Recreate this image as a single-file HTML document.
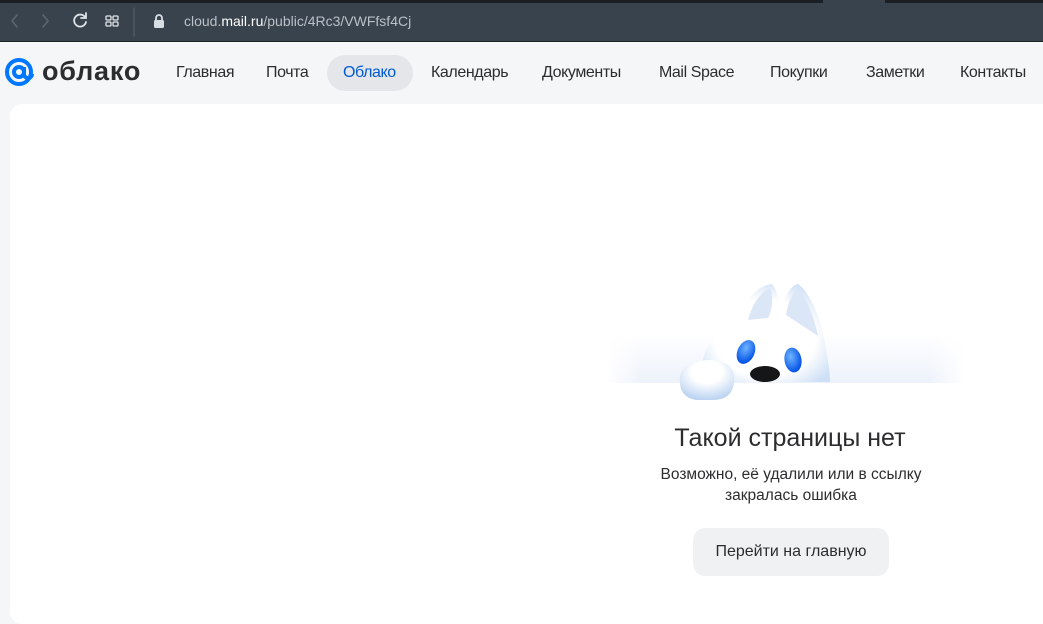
<!DOCTYPE html>
<html><head><meta charset="utf-8"><style>
*{margin:0;padding:0;box-sizing:border-box}
body{width:1043px;height:615px;overflow:hidden;background:#f5f6f7;font-family:"Liberation Sans","Noto Sans CJK SC",sans-serif;position:relative}
.top{position:absolute;left:0;top:0;width:1043px;height:42px;background:#39434d;border-bottom:1px solid #1e2226}
.strip{position:absolute;left:0;top:0;height:3px;background:#1c1f23}
.url{position:absolute;left:184px;top:13px;font-size:14px;color:#b9c0c7}
.url b{color:#fff;font-weight:normal}
.nav a{position:absolute;top:64px;font-size:16px;letter-spacing:-0.4px;color:#2c2d2e;text-decoration:none}
.pill{position:absolute;left:327px;top:55px;width:86px;height:36px;border-radius:18px;background:#e4e6ea}
.card{position:absolute;left:10px;top:104px;width:1050px;height:520px;background:#fff;border-radius:12px}
h1{position:absolute;top:424px;font-size:25px;font-weight:normal;color:#2c2d2e;text-align:center}
.c{position:absolute;left:600px;width:382px;text-align:center;color:#2c2d2e}
.btn{position:absolute;left:693px;top:528px;width:196px;height:48px;border-radius:12px;background:#f0f1f3;font-size:16px;color:#2c2d2e;text-align:center;line-height:48px}
</style></head><body>
<div class="top"></div>
<div class="strip" style="width:823px"></div>
<div class="strip" style="left:885px;width:158px"></div>
<svg style="position:absolute;left:0;top:0" width="180" height="42" fill="none" stroke-linecap="round">
<path d="M17 15l-5 6 5 6" stroke="#5d6670" stroke-width="1.6"/>
<path d="M43 15l5 6-5 6" stroke="#5d6670" stroke-width="1.6"/>
<path d="M85 17a6 6 0 1 0 1 5" stroke="#e0e4e8" stroke-width="1.8"/><path d="M86 13v5h-5" stroke="#e0e4e8" stroke-width="1.8"/>
<rect x="106" y="16" width="5" height="4" rx="1" stroke="#e0e4e8" stroke-width="1.3"/><rect x="113" y="16" width="5" height="4" rx="1" stroke="#e0e4e8" stroke-width="1.3"/><rect x="106" y="22" width="5" height="4" rx="1" stroke="#e0e4e8" stroke-width="1.3"/><rect x="113" y="22" width="5" height="4" rx="1" stroke="#e0e4e8" stroke-width="1.3"/>
<path d="M134 8v28" stroke="#5a636c" stroke-width="1"/>
<rect x="154" y="20" width="10" height="8" rx="1.5" fill="#d8dde2"/><path d="M156 20v-2a3 3 0 0 1 6 0v2" stroke="#d8dde2" stroke-width="1.8"/>
</svg>
<div class="url">cloud.<b>mail.ru</b>/public/4Rc3/VWFfsf4Cj</div>
<svg style="position:absolute;left:4px;top:57px" width="32" height="32"><circle cx="15" cy="15" r="12" fill="none" stroke="#0077ff" stroke-width="4"/><circle cx="15" cy="15" r="5" fill="none" stroke="#0077ff" stroke-width="4"/><path d="M20 10v7a4 4 0 0 0 8 0" fill="none" stroke="#0077ff" stroke-width="4"/></svg>
<div style="position:absolute;left:42px;top:56px;font-size:27px;font-weight:bold;color:#2c2d2e;letter-spacing:0.8px">облако</div>
<div class="pill"></div>
<div class="nav">
<a style="left:176px">Главная</a><a style="left:266px">Почта</a><a style="left:343px;color:#005bd1">Облако</a><a style="left:431px">Календарь</a><a style="left:542px">Документы</a><a style="left:659px">Mail Space</a><a style="left:770px">Покупки</a><a style="left:866px">Заметки</a><a style="left:960px">Контакты</a>
</div>
<div class="card"></div>
<svg style="position:absolute;left:600px;top:270px" width="380" height="140">
<defs>
<linearGradient id="band" x1="0" x2="0" y1="0" y2="1"><stop offset="0" stop-color="#fff"/><stop offset="1" stop-color="#edf2fa"/></linearGradient>
<linearGradient id="bandx" x1="0" x2="1"><stop offset="0" stop-color="#fff" stop-opacity="1"/><stop offset=".1" stop-color="#fff" stop-opacity="0"/><stop offset=".9" stop-color="#fff" stop-opacity="0"/><stop offset="1" stop-color="#fff" stop-opacity="1"/></linearGradient>
<radialGradient id="head" cx=".5" cy=".55" r=".6"><stop offset=".65" stop-color="#fff"/><stop offset="1" stop-color="#cfe0f6"/></radialGradient>
<radialGradient id="paw" cx=".5" cy=".3" r=".7"><stop offset=".4" stop-color="#fff"/><stop offset="1" stop-color="#bcd3f2"/></radialGradient>
<radialGradient id="eye" cx=".4" cy=".35" r=".6"><stop offset="0" stop-color="#6fb5ff"/><stop offset="1" stop-color="#0a58e8"/></radialGradient>
</defs>
<rect x="6" y="63" width="360" height="50" fill="url(#band)"/>
<rect x="6" y="63" width="360" height="50" fill="url(#bandx)"/>
<path d="M100 112 C100 80 115 60 135 52 C145 30 158 15 172 14 C178 20 180 35 180 45 C183 30 190 15 198 14 C210 22 222 50 226 80 C229 95 230 105 230 112 Z" fill="url(#head)"/>
<path d="M148 50 C152 35 160 22 170 18 C174 28 172 40 168 48 Z" fill="#dbe7f7"/>
<path d="M186 45 C188 32 193 22 198 19 C208 30 214 48 218 66 Z" fill="#dbe7f7"/>
<path d="M80 112 C78 98 92 90 110 90 C128 90 136 100 134 112 C133 124 126 130 112 130 L96 130 C84 128 80 120 80 112 Z" fill="url(#paw)"/>
<ellipse cx="146" cy="82" rx="8.5" ry="12.5" transform="rotate(25 146 82)" fill="url(#eye)"/>
<ellipse cx="193" cy="90" rx="8.5" ry="12.5" transform="rotate(-10 193 90)" fill="url(#eye)"/>
<ellipse cx="165" cy="104" rx="15" ry="8" fill="#151618"/>
</svg>
<h1 style="left:605px;width:370px">Такой страницы нет</h1>
<div class="c" style="top:464px;font-size:15.5px;line-height:21px">Возможно, её удалили или в ссылку<br>закралась ошибка</div>
<div class="btn">Перейти на главную</div>
</body></html>
